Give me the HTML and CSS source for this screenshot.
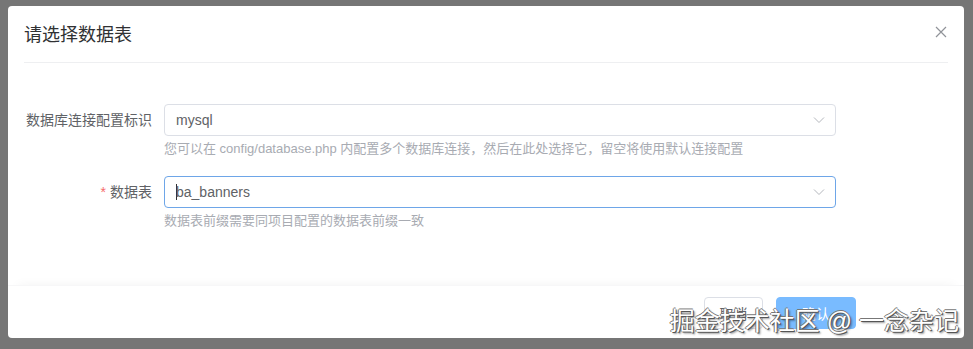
FILE: index.html
```html
<!DOCTYPE html>
<html lang="zh">
<head>
<meta charset="utf-8">
<title>请选择数据表</title>
<link rel="stylesheet" href="styles.css">
</head>
<body>
<div class="dialog">
  <div class="dialog-header">
    <span class="dialog-title">请选择数据表</span>
    <button class="close-btn" aria-label="close">
      <svg width="12" height="12" viewBox="0 0 12 12"><path d="M1 1L11 11M11 1L1 11" stroke="#909399" stroke-width="1.2" fill="none"/></svg>
    </button>
  </div>
  <div class="dialog-body">
    <div class="form-item">
      <label class="form-label">数据库连接配置标识</label>
      <div class="form-content">
        <div class="select">
          <span class="select-value">mysql</span>
          <svg class="arrow" width="12" height="8" viewBox="0 0 12 8"><path d="M1 1.5L6 6.5L11 1.5" stroke="#b4b7bd" stroke-width="1" fill="none"/></svg>
        </div>
        <div class="help">您可以在 config/database.php 内配置多个数据库连接，然后在此处选择它，留空将使用默认连接配置</div>
      </div>
    </div>
    <div class="form-item second">
      <label class="form-label"><span class="req">*</span>数据表</label>
      <div class="form-content">
        <div class="select focused">
          <span class="caret"></span><span class="select-value">ba_banners</span>
          <svg class="arrow" width="12" height="8" viewBox="0 0 12 8"><path d="M1 1.5L6 6.5L11 1.5" stroke="#b4b7bd" stroke-width="1" fill="none"/></svg>
        </div>
        <div class="help">数据表前缀需要同项目配置的数据表前缀一致</div>
      </div>
    </div>
  </div>
  <div class="dialog-footer">
    <button class="btn">取消</button>
    <button class="btn primary">确认</button>
  </div>
</div>
<div class="watermark">掘金技术社区 @ 一念杂记</div>
</body>
</html>
```
FILE: styles.css
```css
html, body {
  margin: 0;
  padding: 0;
}
body {
  background: #767676;
  width: 973px;
  height: 349px;
  overflow: hidden;
  font-family: "Liberation Sans", "Noto Sans CJK SC", sans-serif;
  position: relative;
}
.dialog {
  position: relative;
  margin: 6px 0 0 8px;
  width: 956px;
  height: 332px;
  background: #fff;
  border-radius: 4px;
  display: flex;
  flex-direction: column;
}
.dialog-header {
  margin: 0 16px;
  padding: 17px 0 15px;
  border-bottom: 1px solid #eeeff1;
  display: flex;
  justify-content: space-between;
  align-items: center;
}
.dialog-title {
  font-size: 18px;
  line-height: 24px;
  color: #303133;
}
.close-btn {
  position: absolute;
  right: 17px;
  top: 20px;
  border: 0;
  background: none;
  padding: 0;
  width: 12px;
  height: 12px;
  display: flex;
}
.dialog-body {
  padding: 41px 16px 0;
  display: flex;
  flex-direction: column;
  gap: 17px;
}
.form-item {
  display: flex;
  align-items: flex-start;
}
.form-label {
  width: 140px;
  box-sizing: border-box;
  padding-right: 12px;
  text-align: right;
  font-size: 14px;
  line-height: 32px;
  color: #606266;
}
.req {
  color: #f56c6c;
  margin-right: 4px;
}
.form-content {
  width: 672px;
}
.select {
  height: 32px;
  box-sizing: border-box;
  border: 1px solid #dcdfe6;
  border-radius: 4px;
  display: flex;
  align-items: center;
  padding: 0 10px 0 11px;
  font-size: 14px;
  color: #606266;
}
.select.focused {
  border-color: #6ea6e8;
}
.select-value {
  flex: 1;
}
.caret {
  width: 1px;
  height: 16px;
  background: #303133;
  margin-right: -1px;
}
.help {
  margin-top: 3px;
  font-size: 13px;
  line-height: 20px;
  color: #a8abb2;
}
.dialog-footer {
  margin-top: auto;
  padding: 11px 108px 9px 16px;
  display: flex;
  justify-content: flex-end;
  gap: 13px;
  box-shadow: 0 -10px 10px -10px rgba(0, 0, 0, 0.05);
  border-top: 1px solid #f7f7f8;
}
.btn {
  height: 32px;
  padding: 0;
  border: 1px solid #dcdfe6;
  border-radius: 4px;
  background: #fff;
  color: #606266;
  font-family: inherit;
  font-size: 14px;
  width: 59px;
  white-space: nowrap;
}
.btn.primary {
  width: 80px;
  background: #79bbff;
  border-color: #79bbff;
  color: #fff;
}
.watermark {
  position: absolute;
  right: 14px;
  bottom: 14px;
  font-size: 25px;
  line-height: 28px;
  color: #fff;
  white-space: nowrap;
  text-shadow: 1px 1px 0 #555, -1px 0 0 #777, 0 -1px 0 #777, 2px 2px 2px rgba(0,0,0,0.4);
}
```
